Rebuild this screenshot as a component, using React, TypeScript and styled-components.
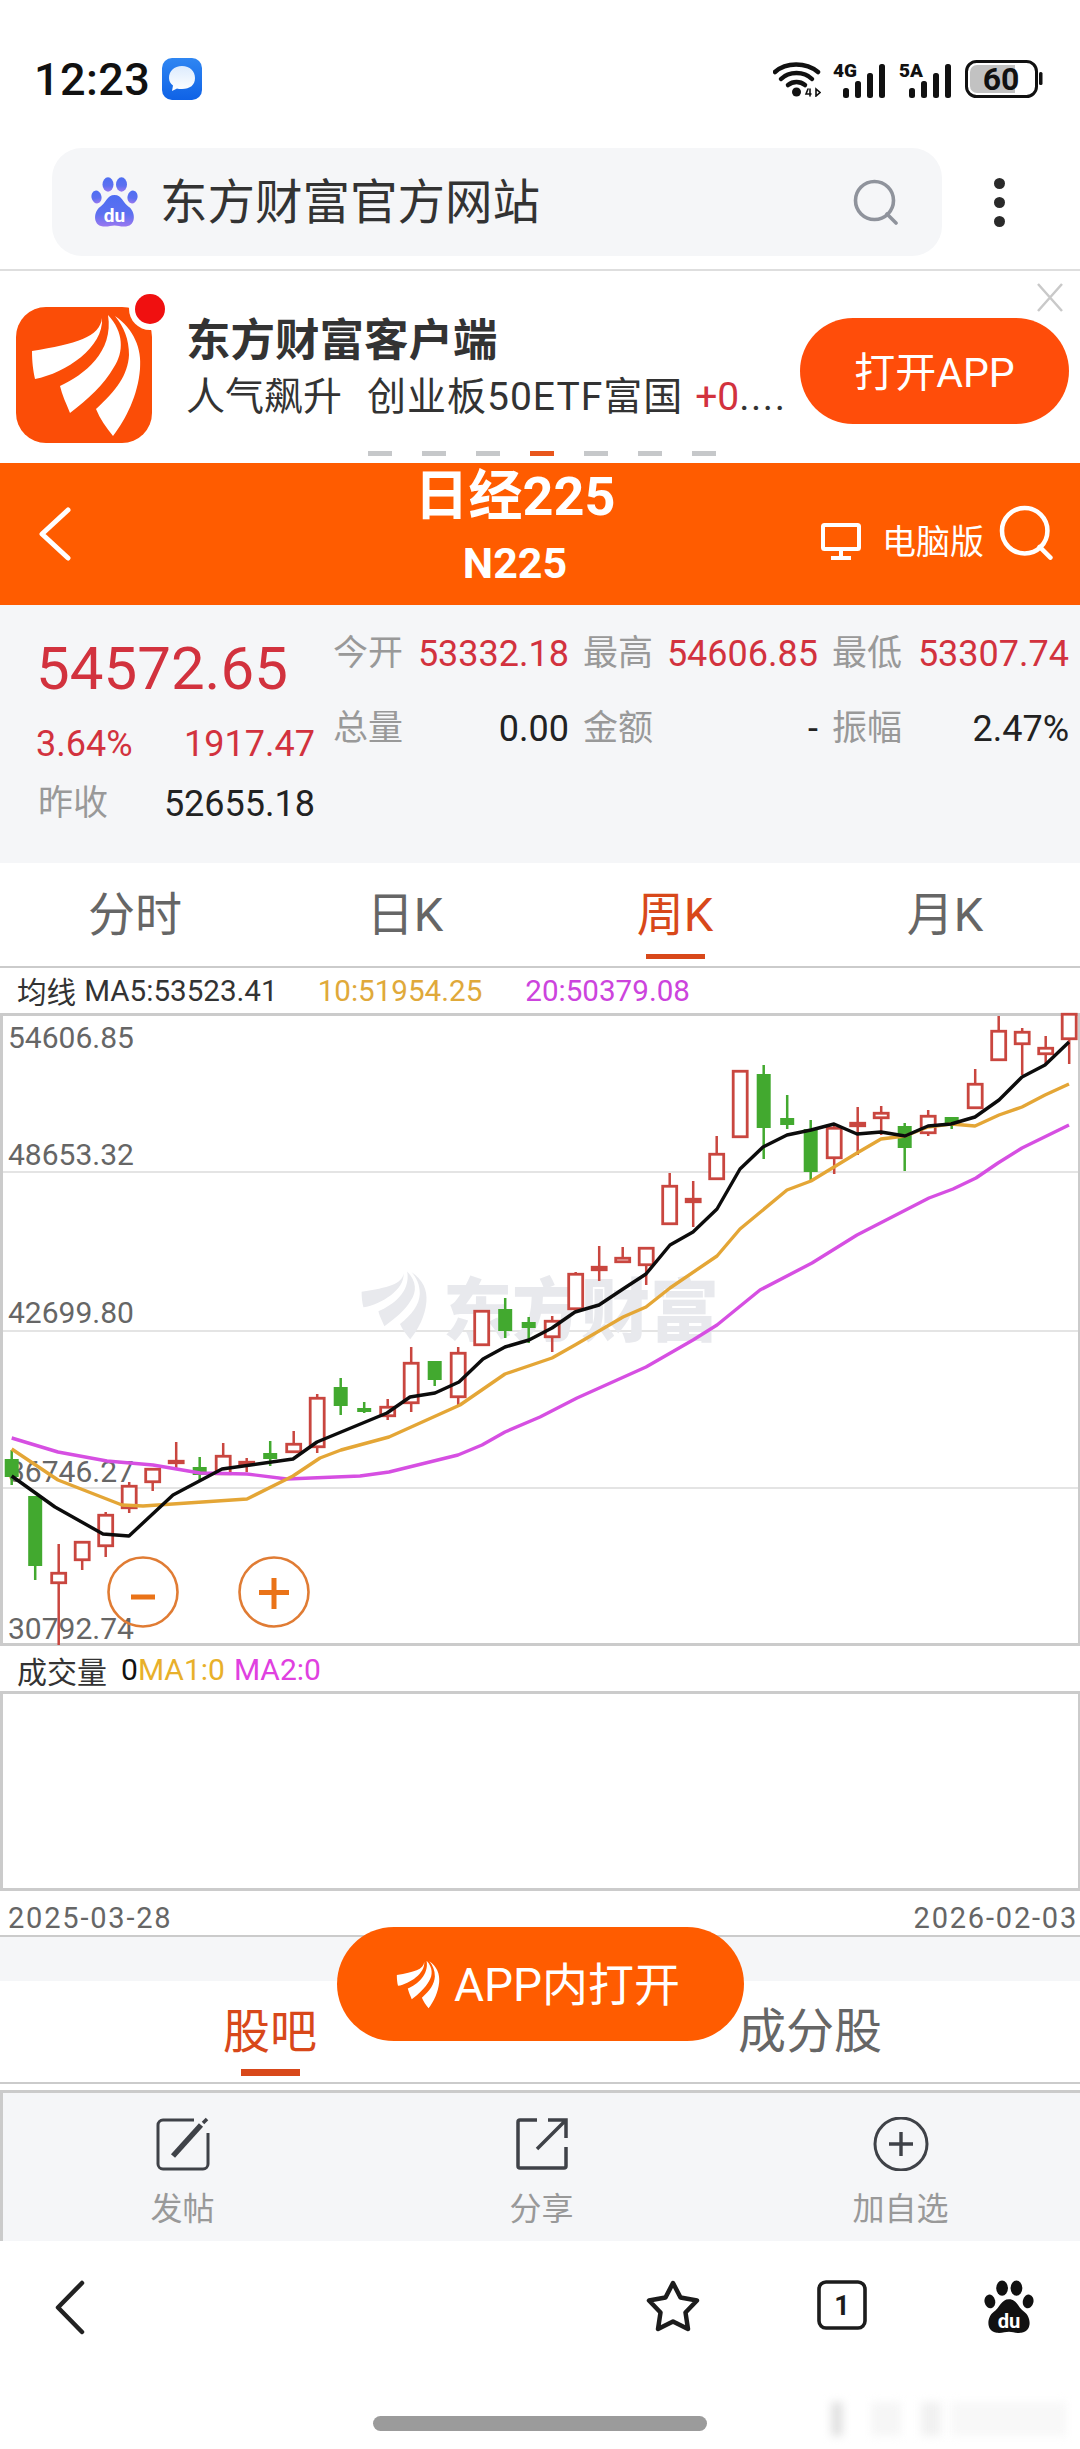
import React from "react";
import styled, { createGlobalStyle } from "styled-components";

const FONT = `Roboto, "Noto Sans CJK SC", sans-serif`;
const ORANGE = "#ff5c00";
const ACTIVE = "#d8481a";
const RED = "#d2323e";
const BORDER = "#cbcbcb";
const PANEL = "#f5f6f8";

const Global = createGlobalStyle`
  html, body { margin: 0; padding: 0; background: #fff; }
  body { font-family: ${FONT}; }
  * { box-sizing: border-box; }
`;

const Page = styled.div`
  position: relative;
  width: 1080px;
  height: 2449px;
  overflow: hidden;
  background: #fff;
  font-family: ${FONT};
`;

/* status bar */
const StatusBar = styled.div`
  height: 148px;
  padding: 10px 37px 0 34px;
  display: flex;
  align-items: center;
`;
const Clock = styled.span`
  font-size: 45px;
  font-weight: 500;
  color: #111;
  letter-spacing: 0.4px;
  margin-right: 12px;
`;
const StatusIcons = styled.div`
  margin-left: auto;
  display: flex;
  align-items: center;
  gap: 12px;
`;

/* search */
const SearchRow = styled.div`
  height: 121px;
  padding-left: 52px;
  display: flex;
  align-items: flex-start;
`;
const SearchPill = styled.div`
  width: 890px;
  height: 108px;
  background: ${PANEL};
  border-radius: 30px;
  display: flex;
  align-items: center;
  padding: 0 43px 0 39px;
`;
const SearchText = styled.span`
  margin-left: 22px;
  padding-bottom: 8px;
  flex: 1;
  font-size: 47.5px;
  color: #333;
`;
const MoreDots = styled.div`
  margin: 0 0 0 52px;
  height: 108px;
  display: flex;
  flex-direction: column;
  justify-content: center;
  gap: 8px;
`;
const MoreDot = styled.i`
  display: block;
  width: 11px;
  height: 11px;
  border-radius: 50%;
  background: #2a2a2a;
`;
const Rule = styled.div`
  height: 2px;
  background: #dedede;
`;

/* ad */
const Ad = styled.div`
  position: relative;
  height: 192px;
  padding: 36px 11px 0 16px;
  display: flex;
  align-items: flex-start;
  background: #fff;
`;
const AdText = styled.div`
  flex: 1;
  min-width: 0;
  margin: 11px 0 0 34px;
`;
const AdTitle = styled.div`
  font-size: 44.5px;
  line-height: 46px;
  font-weight: 700;
  color: #333;
`;
const AdSub = styled.div`
  margin-top: 10px;
  font-size: 39px;
  line-height: 46px;
  color: #333;
  white-space: pre;
`;
const AdFund = styled.span`
  margin-left: 25px;
  letter-spacing: 1px;
`;
const AdRed = styled.span`
  margin-left: 12px;
  color: ${RED};
`;
const AdEllipsis = styled.span`
  letter-spacing: 1.5px;
`;
const AdButton = styled.div`
  width: 269px;
  height: 106px;
  margin-top: 11px;
  padding-bottom: 4px;
  border-radius: 53px;
  background: #ff4d0a;
  color: #fff;
  font-size: 41px;
  display: flex;
  align-items: center;
  justify-content: center;
`;
const AdClose = styled.svg`
  position: absolute;
  right: 16px;
  top: 12px;
`;
const AdDots = styled.div`
  position: absolute;
  left: 368px;
  bottom: 7px;
  display: flex;
  gap: 30px;
`;
const AdDot = styled.i<{ $on?: boolean }>`
  display: block;
  width: 24px;
  height: 5px;
  background: ${(p) => (p.$on ? "#e8561c" : "#c6c8ca")};
`;

/* header */
const Header = styled.div`
  height: 142px;
  background: ${ORANGE};
  color: #fff;
  display: grid;
  grid-template-columns: 240px 550px 1fr;
  align-items: start;
`;
const HeaderLeft = styled.div`
  padding: 44px 0 0 39px;
`;
const HeaderCenter = styled.div`
  padding-top: 6px;
  text-align: center;
`;
const HeaderTitle = styled.div`
  font-size: 54px;
  line-height: 56px;
  font-weight: 700;
`;
const HeaderCode = styled.div`
  margin-top: 16px;
  font-size: 43px;
  line-height: 44px;
  font-weight: 700;
`;
const HeaderRight = styled.div`
  padding: 42px 0 0 31px;
  display: flex;
  align-items: flex-start;
`;
const DesktopText = styled.span`
  margin: 17px 15px 0 21px;
  font-size: 34px;
  line-height: 40px;
  white-space: nowrap;
`;

/* quote */
const Quote = styled.div`
  height: 258px;
  background: ${PANEL};
  display: flex;
`;
const QuoteLeft = styled.div`
  width: 333px;
  padding: 32px 18px 0 36px;
`;
const Price = styled.div`
  font-size: 60px;
  line-height: 64px;
  color: ${RED};
`;
const ChangeRow = styled.div`
  margin-top: 23px;
  display: flex;
  justify-content: space-between;
  font-size: 36px;
  line-height: 40px;
  color: ${RED};
`;
const PrevRow = styled.div`
  margin-top: 20px;
  padding-left: 2px;
  display: flex;
  justify-content: space-between;
  font-size: 36px;
  line-height: 40px;
`;
const QuoteGrid = styled.div`
  width: 736px;
  padding-top: 29px;
  display: grid;
  grid-template-columns: 236px 235px 237px;
  column-gap: 14px;
  row-gap: 35px;
  align-content: start;
`;
const Stat = styled.div`
  display: flex;
  justify-content: space-between;
  font-size: 36px;
  line-height: 40px;
`;
const StatLabel = styled.span`
  color: #999;
  font-size: 35px;
`;
const StatValue = styled.span<{ $red?: boolean }>`
  color: ${(p) => (p.$red ? RED : "#222")};
`;

/* tabs */
const TabBar = styled.div<{ $cols: number; $h: number }>`
  height: ${(p) => p.$h}px;
  display: grid;
  grid-template-columns: repeat(${(p) => p.$cols}, 1fr);
  background: #fff;
`;
const Tab = styled.div<{ $pad: number }>`
  padding-top: ${(p) => p.$pad}px;
  display: flex;
  flex-direction: column;
  align-items: center;
`;
const TabLabel = styled.span<{ $active?: boolean; $size: number }>`
  font-size: ${(p) => p.$size}px;
  line-height: 52px;
  color: ${(p) => (p.$active ? ACTIVE : "#666")};
`;
const TabMark = styled.i<{ $gap: number; $h: number }>`
  display: block;
  width: 59px;
  height: ${(p) => p.$h}px;
  margin-top: ${(p) => p.$gap}px;
  background: ${ACTIVE};
`;
const TabRule = styled.div<{ $h: number }>`
  height: ${(p) => p.$h}px;
  background: ${BORDER};
`;

/* MA legend */
const Legend = styled.div<{ $size: number; $pt: number }>`
  height: 45px;
  padding: ${(p) => p.$pt}px 0 0 17px;
  display: flex;
  align-items: center;
  font-size: ${(p) => p.$size}px;
  white-space: nowrap;
`;
const LegendName = styled.span`
  color: #333;
`;
const LegendItem = styled.span<{ $color: string; $ml: number }>`
  color: ${(p) => p.$color};
  margin-left: ${(p) => p.$ml}px;
`;

/* chart */
const ChartFrame = styled.div`
  height: 633px;
  border: solid ${BORDER};
  border-width: 3px 2px 3px 3px;
`;
const ChartSvg = styled.svg`
  display: block;
  overflow: visible;
  text {
    font-family: ${FONT};
  }
`;
const VolumeBox = styled.div`
  height: 200px;
  border: 3px solid ${BORDER};
  border-right-width: 2px;
`;
const DateRow = styled.div`
  height: 44px;
  padding: 10px 2px 0 8px;
  display: flex;
  justify-content: space-between;
  align-items: center;
  font-size: 29px;
  letter-spacing: 1.8px;
  color: #666;
`;
const GrayStrip = styled.div`
  height: 44px;
  background: ${PANEL};
`;
const StockSection = styled.div`
  position: relative;
`;
const OpenButton = styled.div`
  position: absolute;
  left: 337px;
  top: -54px;
  width: 407px;
  height: 114px;
  border-radius: 57px;
  background: ${ORANGE};
  color: #fff;
  font-size: 46px;
  display: flex;
  align-items: center;
  padding-left: 59px;
  gap: 14px;
`;
const OpenLabel = styled.span`
  padding-bottom: 6px;
`;

/* action bar */
const ActionBar = styled.div`
  margin-top: 6px;
  height: 151px;
  background: ${PANEL};
  border-top: 3px solid ${BORDER};
  border-left: 3px solid ${BORDER};
  display: grid;
  grid-template-columns: repeat(3, 1fr);
`;
const Action = styled.div`
  padding-top: 24px;
  display: flex;
  flex-direction: column;
  align-items: center;
`;
const ActionLabel = styled.span`
  margin-top: 18px;
  font-size: 32px;
  line-height: 40px;
  color: #999;
`;

/* browser nav */
const Nav = styled.div`
  height: 208px;
  padding-top: 39px;
  background: #fff;
`;
const NavRow = styled.div`
  height: 55px;
  padding: 0 46px 0 55px;
  display: flex;
  align-items: flex-start;
`;
const NavRight = styled.div`
  margin-left: auto;
  display: flex;
  gap: 117px;
`;
const HomeBar = styled.div`
  width: 334px;
  height: 15px;
  margin: 81px 0 0 373px;
  border-radius: 8px;
  background: #9b9b9b;
`;
const Smudge = styled.div`
  position: absolute;
  left: 816px;
  top: 2402px;
  width: 250px;
  height: 34px;
  filter: blur(4px);
  background: linear-gradient(
    90deg,
    transparent 0 6%,
    #e2e2e2 6% 11%,
    transparent 11% 22%,
    #f6f6f6 22% 34%,
    transparent 34% 42%,
    #f1f1f1 42% 50%,
    transparent 50% 54%,
    #f8f8f8 54% 100%
  );
`;

/* drawings */
const Feathers = ({ fill }: { fill: string }) => (
  <g fill={fill}>
    <path d="M86 11C84 30 60 37 16 44C16 55 17 63 19 72C50 66 88 40 86 11Z" />
    <path d="M92 8C108 25 108 45 98 60C88 78 72 92 54 106C50 96 46 88 44 79C68 68 98 45 92 8Z" />
    <path d="M99 9C118 22 126 42 124 62C122 88 110 112 97 129C90 120 84 112 80 102C100 84 112 68 113 48C113 32 108 20 99 9Z" />
  </g>
);

const Paw = ({ size, fill, text }: { size: number; fill: string; text: string }) => (
  <svg width={size} height={size * 1.07} viewBox="0 0 47 50">
    <ellipse cx="5.5" cy="20" rx="5" ry="6.5" fill={fill} transform="rotate(-12 5.5 20)" />
    <ellipse cx="17" cy="7.5" rx="5.5" ry="7.2" fill={fill} />
    <ellipse cx="30.5" cy="7.5" rx="5.5" ry="7.2" fill={fill} />
    <ellipse cx="41.5" cy="20" rx="5" ry="6.5" fill={fill} transform="rotate(12 41.5 20)" />
    <path
      d="M23.5 18C31 18 32 26 38 30C44 34 46 48 35 49.5C30 50 27 48.5 23.5 48.5C20 48.5 17 50 12 49.5C1 48 3 34 9 30C15 26 16 18 23.5 18Z"
      fill={fill}
    />
    <text x="23.5" y="45" textAnchor="middle" fontSize="19" fontWeight="700" fontFamily="Roboto, sans-serif" fill={text}>
      du
    </text>
  </svg>
);

const BaiduColorPaw = () => (
  <svg width="47" height="50" viewBox="0 0 47 50">
    <defs>
      <linearGradient id="pawG" x1="0" y1="0" x2="0" y2="1">
        <stop offset="0" stopColor="#4e6ef2" />
        <stop offset="0.6" stopColor="#5d70f0" />
        <stop offset="1" stopColor="#9a78f0" />
      </linearGradient>
    </defs>
    <ellipse cx="5.5" cy="20" rx="5" ry="6.5" fill="url(#pawG)" transform="rotate(-12 5.5 20)" />
    <ellipse cx="17" cy="7.5" rx="5.5" ry="7.2" fill="url(#pawG)" />
    <ellipse cx="30.5" cy="7.5" rx="5.5" ry="7.2" fill="url(#pawG)" />
    <ellipse cx="41.5" cy="20" rx="5" ry="6.5" fill="url(#pawG)" transform="rotate(12 41.5 20)" />
    <path
      d="M23.5 18C31 18 32 26 38 30C44 34 46 48 35 49.5C30 50 27 48.5 23.5 48.5C20 48.5 17 50 12 49.5C1 48 3 34 9 30C15 26 16 18 23.5 18Z"
      fill="url(#pawG)"
    />
    <text x="23.5" y="45" textAnchor="middle" fontSize="19" fontWeight="700" fontFamily="Roboto, sans-serif" fill="#fff">
      du
    </text>
  </svg>
);

const MagnifierIcon = ({ w, h, color, sw }: { w: number; h: number; color: string; sw: number }) => (
  <svg width={w} height={h} viewBox="0 0 46 46" fill="none" stroke={color} strokeWidth={sw} strokeLinecap="round">
    <circle cx="21.5" cy="21.5" r="19" />
    <path d="M34 35L43 44" />
  </svg>
);

const Signal = ({ label }: { label: string }) => (
  <svg width="54" height="40" viewBox="0 -4 54 40">
    <text x="0" y="14" fontSize="19" fontWeight="900" fontFamily="Roboto, sans-serif" fill="#111">
      {label}
    </text>
    {[10, 17, 25, 34].map((h, i) => (
      <rect key={i} x={10 + i * 12} y={35 - h} width="6" height={h} rx="2.5" fill="#111" />
    ))}
  </svg>
);

const ChevronIcon = ({ w, h, color, sw }: { w: number; h: number; color: string; sw: number }) => (
  <svg width={w} height={h} viewBox={`0 0 ${w} ${h}`} fill="none" stroke={color} strokeWidth={sw} strokeLinecap="round" strokeLinejoin="round">
    <path d={`M${w - 3} 3L3 ${h / 2}L${w - 3} ${h - 3}`} />
  </svg>
);

type Candle = [number, number, number, number, "r" | "g"];
// body top, body bottom, wick top, wick bottom, in page pixels
const CANDLES: Candle[] = [
  [1459, 1477, 1450, 1485, "g"],
  [1496, 1566, 1496, 1580, "g"],
  [1572, 1584, 1544, 1645, "r"],
  [1541, 1561, 1541, 1570, "r"],
  [1514, 1547, 1512, 1557, "r"],
  [1485, 1509, 1482, 1513, "r"],
  [1468, 1483, 1468, 1491, "r"],
  [1460, 1464, 1442, 1468, "r"],
  [1467, 1475, 1457, 1480, "g"],
  [1455, 1475, 1443, 1475, "r"],
  [1461, 1465, 1458, 1472, "r"],
  [1453, 1459, 1441, 1466, "g"],
  [1443, 1453, 1431, 1453, "r"],
  [1397, 1448, 1394, 1453, "r"],
  [1387, 1406, 1378, 1415, "g"],
  [1408, 1412, 1402, 1413, "g"],
  [1406, 1417, 1399, 1420, "r"],
  [1362, 1404, 1347, 1412, "r"],
  [1361, 1380, 1361, 1386, "g"],
  [1352, 1398, 1347, 1405, "r"],
  [1310, 1346, 1310, 1346, "r"],
  [1309, 1331, 1298, 1338, "g"],
  [1322, 1328, 1317, 1343, "g"],
  [1320, 1338, 1316, 1352, "r"],
  [1273, 1310, 1272, 1310, "r"],
  [1266, 1271, 1246, 1281, "r"],
  [1257, 1263, 1247, 1263, "r"],
  [1247, 1266, 1247, 1285, "r"],
  [1185, 1225, 1173, 1225, "r"],
  [1198, 1203, 1181, 1227, "r"],
  [1153, 1180, 1136, 1180, "r"],
  [1070, 1138, 1070, 1138, "r"],
  [1074, 1128, 1065, 1159, "g"],
  [1118, 1125, 1095, 1129, "g"],
  [1129, 1172, 1120, 1180, "g"],
  [1127, 1159, 1124, 1174, "r"],
  [1122, 1127, 1107, 1155, "r"],
  [1112, 1119, 1106, 1135, "r"],
  [1126, 1148, 1123, 1171, "g"],
  [1115, 1134, 1110, 1136, "r"],
  [1117, 1124, 1117, 1129, "g"],
  [1083, 1109, 1069, 1109, "r"],
  [1030, 1061, 1016, 1061, "r"],
  [1031, 1045, 1028, 1075, "r"],
  [1047, 1055, 1036, 1065, "r"],
  [1013, 1040, 1013, 1064, "r"],
];

const MA5 =
  "11.7,1476 55,1507 103,1534 129,1536 173,1495 222,1469 293,1459 317,1442 387,1413 410,1397 435,1393 459,1382 483,1359 505,1347 529,1340 552,1328 575,1312 599,1305 623,1289 646,1274 670,1245 693,1232 717,1209 740,1169 763,1147 787,1135 811,1130 834,1124 857,1134 881,1132 905,1136 928,1126 951,1124 975,1117 999,1100 1022,1077 1045,1065 1069,1042";
const MA10 =
  "11.7,1449 58,1480 122,1505 143,1506 247,1499 293,1476 320,1458 341,1450 389,1437 460,1405 505,1374 552,1358 575,1345 623,1317 646,1307 670,1288 717,1256 740,1229 787,1190 811,1181 834,1167 857,1153 881,1139 905,1136 928,1127 951,1124 975,1126 999,1115 1022,1107 1045,1095 1069,1084";
const MA20 =
  "11.7,1438 58,1452 107,1461 153,1465 200,1473 247,1474 287,1479 360,1476 389,1472 458,1455 482,1445 505,1432 540,1417 577,1398 646,1367 693,1340 717,1325 760,1290 812,1263 857,1235 929,1198 953,1189 976,1178 998,1163 1022,1148 1069,1125";

const CANDLE_RED = "#c9463f";
const CANDLE_GREEN = "#42a92f";

const CandleMark = ({ c, i }: { c: Candle; i: number }) => {
  const x = 11.7 + 23.5 * i;
  const [top, bottom, wickTop, wickBottom, kind] = c;
  if (kind === "g") {
    return (
      <g fill={CANDLE_GREEN}>
        <rect x={x - 1.25} y={wickTop} width="2.5" height={wickBottom - wickTop} />
        <rect x={x - 7} y={top} width="14" height={bottom - top} />
      </g>
    );
  }
  return (
    <g>
      <rect x={x - 1.25} y={wickTop} width="2.5" height={wickBottom - wickTop} fill={CANDLE_RED} />
      <rect x={x - 7} y={top + 1.25} width="14" height={Math.max(bottom - top - 2.5, 0.5)} fill="#fff" stroke={CANDLE_RED} strokeWidth="2.8" />
    </g>
  );
};

const AXIS: [string, number][] = [
  ["54606.85", 1048],
  ["48653.32", 1165],
  ["42699.80", 1323],
  ["36746.27", 1482],
  ["30792.74", 1639],
];

const KChart = () => (
  <ChartSvg width="1075" height="627" viewBox="3 1016 1075 627">
    {[1172, 1331, 1488].map((y) => (
      <rect key={y} x="3" y={y - 0.75} width="1075" height="1.5" fill="#dcdcdc" />
    ))}
    <g transform="translate(352 1267) scale(0.6 0.56)">
      <Feathers fill="#e8e9ed" />
    </g>
    <text x="443" y="1336" fontSize="69" fontWeight="900" fill="#e8e9ed">
      东方财富
    </text>
    {AXIS.map(([t, y]) => (
      <text key={t} x="8" y={y} fontSize="30" fill="#666">
        {t}
      </text>
    ))}
    {CANDLES.map((c, i) => (
      <CandleMark key={i} c={c} i={i} />
    ))}
    <polyline points={MA20} fill="none" stroke="#d64fe2" strokeWidth="3.4" strokeLinejoin="round" />
    <polyline points={MA10} fill="none" stroke="#e4a636" strokeWidth="3.4" strokeLinejoin="round" />
    <polyline points={MA5} fill="none" stroke="#0c0c0c" strokeWidth="3.4" strokeLinejoin="round" />
    <g fill="none" stroke="#e07c34" strokeWidth="2.6">
      <circle cx="143" cy="1592" r="34.5" />
      <circle cx="274" cy="1592" r="34.5" />
    </g>
    <g fill="#ea7318">
      <rect x="131" y="1594.5" width="24" height="5" />
      <rect x="259" y="1590" width="30" height="5" />
      <rect x="271.5" y="1578" width="5" height="31" />
    </g>
  </ChartSvg>
);

const STATS: [string, string, boolean][] = [
  ["今开", "53332.18", true],
  ["最高", "54606.85", true],
  ["最低", "53307.74", true],
  ["总量", "0.00", false],
  ["金额", "-", false],
  ["振幅", "2.47%", false],
];

export default function App() {
  return (
    <Page>
      <Global />
      <StatusBar>
        <Clock>12:23</Clock>
        <svg width="40" height="42" viewBox="0 0 40 42">
          <defs>
            <linearGradient id="msgG" x1="0" y1="0" x2="0" y2="1">
              <stop offset="0" stopColor="#2f86f2" />
              <stop offset="1" stopColor="#0f62e6" />
            </linearGradient>
            <linearGradient id="msgW" x1="0" y1="0" x2="0" y2="1">
              <stop offset="0" stopColor="#dcebfd" />
              <stop offset="1" stopColor="#ffffff" />
            </linearGradient>
          </defs>
          <rect width="40" height="42" rx="10" fill="url(#msgG)" />
          <path d="M20 8C28 8 33 13 33 20C33 27 28 31 20 31C18 31 16 31 15 30.5L10 33L11 27.5C8.5 25.5 7 23 7 20C7 13 12 8 20 8Z" fill="url(#msgW)" />
        </svg>
        <StatusIcons>
          <svg width="48" height="36" viewBox="0 0 48 36" fill="none" stroke="#111" strokeLinecap="round">
            <path d="M2 11C13 1 33 1 45 11" strokeWidth="4.5" />
            <path d="M8 18C16 10 31 10 39 18" strokeWidth="4.5" />
            <path d="M15 24C20 20 27 20 32 24" strokeWidth="4.5" />
            <circle cx="23.5" cy="31" r="4.5" fill="#111" stroke="none" />
            <path d="M35 28L33 33H38M37 28V35M43 28V35L47 31.5Z" strokeWidth="1.6" />
          </svg>
          <Signal label="4G" />
          <Signal label="5A" />
          <svg width="78" height="38" viewBox="0 0 78 38">
            <rect x="1.5" y="1.5" width="70" height="35" rx="10" fill="#fff" stroke="#111" strokeWidth="3" />
            <path d="M5 12a7 7 0 0 1 7-7H50V33H12a7 7 0 0 1-7-7Z" fill="#c2c2c2" />
            <text x="36" y="30" textAnchor="middle" fontSize="32" fontWeight="700" fontFamily="Roboto, sans-serif" fill="#111">
              60
            </text>
            <rect x="74" y="12" width="3.5" height="13" rx="1.5" fill="#111" />
          </svg>
        </StatusIcons>
      </StatusBar>

      <SearchRow>
        <SearchPill>
          <BaiduColorPaw />
          <SearchText>东方财富官方网站</SearchText>
          <MagnifierIcon w={46} h={46} color="#8f939c" sw={3.6} />
        </SearchPill>
        <MoreDots>
          <MoreDot />
          <MoreDot />
          <MoreDot />
        </MoreDots>
      </SearchRow>
      <Rule />

      <Ad>
        <svg width="136" height="136" viewBox="0 0 136 136" style={{ overflow: "visible" }}>
          <rect width="136" height="136" rx="30" fill="#fb4d07" />
          <Feathers fill="#fff" />
          <circle cx="134" cy="2" r="21" fill="#fff" />
          <circle cx="134" cy="2" r="15" fill="#f01010" />
        </svg>
        <AdText>
          <AdTitle>东方财富客户端</AdTitle>
          <AdSub>
            人气飙升<AdFund>创业板50ETF富国</AdFund>
            <AdRed>+0</AdRed>
            <AdEllipsis>....</AdEllipsis>
          </AdSub>
        </AdText>
        <AdButton>打开APP</AdButton>
        <AdClose width="28" height="29" viewBox="0 0 28 29" fill="none" stroke="#c9c9c9" strokeWidth="2.5">
          <path d="M2 1L26 28M26 1L2 28" />
        </AdClose>
        <AdDots>
          {[0, 1, 2, 3, 4, 5, 6].map((i) => (
            <AdDot key={i} $on={i === 3} />
          ))}
        </AdDots>
      </Ad>

      <Header>
        <HeaderLeft>
          <ChevronIcon w={32} h={54} color="#fff" sw={5} />
        </HeaderLeft>
        <HeaderCenter>
          <HeaderTitle>日经225</HeaderTitle>
          <HeaderCode>N225</HeaderCode>
        </HeaderCenter>
        <HeaderRight>
          <svg width="40" height="37" viewBox="0 0 40 37" fill="none" stroke="#fff" strokeWidth="4" style={{ marginTop: 18 }}>
            <rect x="2" y="2" width="36" height="24" rx="1.5" />
            <path d="M20 26V34M10 35H30" />
          </svg>
          <DesktopText>电脑版</DesktopText>
          <MagnifierIcon w={55} h={55} color="#fff" sw={3.8} />
        </HeaderRight>
      </Header>

      <Quote>
        <QuoteLeft>
          <Price>54572.65</Price>
          <ChangeRow>
            <span>3.64%</span>
            <span>1917.47</span>
          </ChangeRow>
          <PrevRow>
            <StatLabel>昨收</StatLabel>
            <StatValue>52655.18</StatValue>
          </PrevRow>
        </QuoteLeft>
        <QuoteGrid>
          {STATS.map(([label, value, red]) => (
            <Stat key={label}>
              <StatLabel>{label}</StatLabel>
              <StatValue $red={red}>{value}</StatValue>
            </Stat>
          ))}
        </QuoteGrid>
      </Quote>

      <TabBar $cols={4} $h={103}>
        {["分时", "日K", "周K", "月K"].map((t) => (
          <Tab key={t} $pad={26}>
            <TabLabel $size={47} $active={t === "周K"}>
              {t}
            </TabLabel>
            {t === "周K" && <TabMark $gap={13} $h={5} />}
          </Tab>
        ))}
      </TabBar>
      <TabRule $h={2} />

      <Legend $size={29.6} $pt={0}>
        <LegendName>均线</LegendName>
        <LegendItem $color="#333" $ml={8}>MA5:53523.41</LegendItem>
        <LegendItem $color="#e0a93a" $ml={40}>10:51954.25</LegendItem>
        <LegendItem $color="#cc44dd" $ml={43}>20:50379.08</LegendItem>
      </Legend>
      <ChartFrame>
        <KChart />
      </ChartFrame>

      <Legend $size={30} $pt={2}>
        <LegendName>成交量</LegendName>
        <LegendItem $color="#111" $ml={14}>0</LegendItem>
        <LegendItem $color="#e8b02a" $ml={0}>MA1:0</LegendItem>
        <LegendItem $color="#e040e0" $ml={9}>MA2:0</LegendItem>
      </Legend>
      <VolumeBox />
      <DateRow>
        <span>2025-03-28</span>
        <span>2026-02-03</span>
      </DateRow>
      <TabRule $h={2} />
      <GrayStrip />

      <StockSection>
        <TabBar $cols={2} $h={101}>
          <Tab $pad={25}>
            <TabLabel $size={47} $active>
              股吧
            </TabLabel>
            <TabMark $gap={11} $h={7} />
          </Tab>
          <Tab $pad={25}>
            <TabLabel $size={48}>成分股</TabLabel>
          </Tab>
        </TabBar>
        <OpenButton>
          <svg width="44" height="49" viewBox="14 6 112 125">
            <Feathers fill="#fff" />
          </svg>
          <OpenLabel>APP内打开</OpenLabel>
        </OpenButton>
      </StockSection>
      <TabRule $h={2} />

      <ActionBar>
        <Action>
          <svg width="54" height="54" viewBox="0 0 54 54" fill="none" stroke="#3f4248" strokeWidth="3">
            <path d="M38 3H7a5 5 0 0 0-5 5V47a5 5 0 0 0 5 5H47a5 5 0 0 0 5-5V16" />
            <path d="M17 39L45 8" strokeWidth="5.5" />
            <path d="M47 6L51 2" strokeWidth="3.5" />
          </svg>
          <ActionLabel>发帖</ActionLabel>
        </Action>
        <Action>
          <svg width="54" height="54" viewBox="0 0 54 54" fill="none" stroke="#3f4248" strokeWidth="3.5">
            <path d="M22 3H5a2 2 0 0 0-2 2V49a2 2 0 0 0 2 2H49a2 2 0 0 0 2-2V30" />
            <path d="M22 32L50 4M33 3H51V21" />
          </svg>
          <ActionLabel>分享</ActionLabel>
        </Action>
        <Action>
          <svg width="56" height="54" viewBox="0 0 56 54" fill="none" stroke="#3f4248" strokeWidth="3">
            <circle cx="28" cy="27" r="26" />
            <path d="M16 27H40M28 15V39" strokeWidth="3.4" />
          </svg>
          <ActionLabel>加自选</ActionLabel>
        </Action>
      </ActionBar>

      <Nav>
        <NavRow>
          <ChevronIcon w={30} h={55} color="#222" sw={4.5} />
          <NavRight>
            <svg width="54" height="52" viewBox="0 0 54 52" fill="none" stroke="#1c1c1c" strokeWidth="4.5" strokeLinejoin="round">
              <path d="M27 3L34.5 17.5L51 20.5L39.5 32.5L42 49L27 41.5L12 49L14.5 32.5L3 20.5L19.5 17.5Z" />
            </svg>
            <svg width="50" height="50" viewBox="0 0 50 50">
              <rect x="2" y="2" width="46" height="46" rx="7" fill="none" stroke="#1c1c1c" strokeWidth="3.6" />
              <text x="25" y="35" textAnchor="middle" fontSize="27" fontWeight="700" fontFamily="Roboto, sans-serif" fill="#1c1c1c">
                1
              </text>
            </svg>
            <Paw size={50} fill="#111" text="#fff" />
          </NavRight>
        </NavRow>
        <HomeBar />
      </Nav>
      <Smudge />
    </Page>
  );
}
